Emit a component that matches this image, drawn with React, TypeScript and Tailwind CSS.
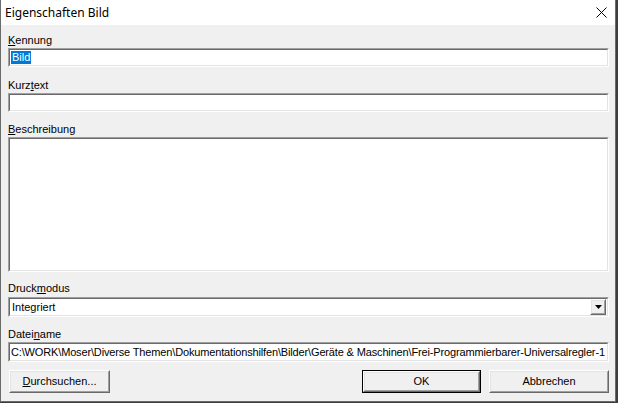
import type { ReactNode } from "react";

const font = { fontFamily: '"Liberation Sans", Arial, sans-serif' };

function Label({ children, className = "" }: { children: ReactNode; className?: string }) {
  return <div className={`h-[13px] text-[11px] leading-[13px] text-black ${className}`}>{children}</div>;
}

function Sunken({ children, className = "" }: { children?: ReactNode; className?: string }) {
  return (
    <div className={`border border-t-[#a0a0a0] border-l-[#a0a0a0] border-b-white border-r-white ${className}`}>
      <div className="flex h-full items-center overflow-hidden border border-t-[#696969] border-l-[#696969] border-b-[#e3e3e3] border-r-[#e3e3e3] bg-white text-[11px] leading-[13px] text-black">
        {children}
      </div>
    </div>
  );
}

function Button({ children, primary = false, className = "" }: { children: ReactNode; primary?: boolean; className?: string }) {
  const inner = (
    <div className="h-full border border-t-white border-l-white border-b-[#696969] border-r-[#696969]">
      <div className="flex h-full items-center justify-center border border-t-[#e3e3e3] border-l-[#e3e3e3] border-b-[#a0a0a0] border-r-[#a0a0a0] bg-[#f0f0f0] text-[11px] text-black">
        {children}
      </div>
    </div>
  );
  return primary ? (
    <div className={`h-[23px] border border-black ${className}`}>{inner}</div>
  ) : (
    <div className={`h-[23px] ${className}`}>{inner}</div>
  );
}

export default function App() {
  return (
    <div className="flex h-[403px] w-[618px] bg-[#3b3f3a]" style={font}>
      <div className="flex h-[402px] w-[616px] flex-col border border-t-0 border-[#6b6b6b] bg-[#f0f0f0]">
        {/* title bar */}
        <div className="flex h-[25px] items-center justify-between bg-white pl-[4px] pr-[7px]">
          <span className="text-[12px] text-black" style={{ fontFamily: '"Noto Sans", "Open Sans", sans-serif' }}>
            Eigenschaften Bild
          </span>
          <svg width="11" height="11" viewBox="0 0 11 11" className="mr-[1px]">
            <path d="M0.5 0.5 L10.5 10.5 M10.5 0.5 L0.5 10.5" stroke="#000" strokeWidth="1" fill="none" />
          </svg>
        </div>

        <div className="flex flex-1 flex-col pl-[7px] pr-[6px]">
          <Label className="mt-[9px]">
            <u>K</u>ennung
          </Label>
          <Sunken className="mt-[1px] h-[19px]">
            <span className="ml-[1px] bg-[#0078d7] px-[1px] text-white">Bild</span>
          </Sunken>

          <Label className="mt-[12px]">
            Kurz<u>t</u>ext
          </Label>
          <Sunken className="mt-[1px] h-[19px]" />

          <Label className="mt-[11px]">
            <u>B</u>eschreibung
          </Label>
          <Sunken className="mt-[1px] h-[135px]" />

          <Label className="mt-[10px]">
            Druck<u>m</u>odus
          </Label>
          <Sunken className="mt-[2px] h-[20px]">
            <span className="ml-[2px] flex-1">Integriert</span>
            <div className="mr-[1px] h-[16px] w-[16px] border border-t-white border-l-white border-b-[#696969] border-r-[#696969]">
              <div className="flex h-full items-center justify-center border border-t-[#e3e3e3] border-l-[#e3e3e3] border-b-[#a0a0a0] border-r-[#a0a0a0] bg-[#f0f0f0]">
                <svg width="7" height="4" viewBox="0 0 7 4">
                  <path d="M0 0 H7 L3.5 4 Z" fill="#000" />
                </svg>
              </div>
            </div>
          </Sunken>

          <Label className="mt-[11px]">
            Datei<u>n</u>ame
          </Label>
          <Sunken className="mt-[1px] h-[20px]">
            <span className="ml-[1px] whitespace-nowrap tracking-[-0.15px]">
              C:\WORK\Moser\Diverse Themen\Dokumentationshilfen\Bilder\Geräte &amp; Maschinen\Frei-Programmierbarer-Universalregler-1
            </span>
          </Sunken>

          <div className="mt-[8px] flex items-center">
            <Button className="ml-[1px] w-[101px]">
              <span>
                <u>D</u>urchsuchen...
              </span>
            </Button>
            <div className="flex-1" />
            <Button primary className="w-[119px]">
              OK
            </Button>
            <Button className="ml-[8px] w-[120px]">Abbrechen</Button>
          </div>
        </div>
      </div>
    </div>
  );
}
